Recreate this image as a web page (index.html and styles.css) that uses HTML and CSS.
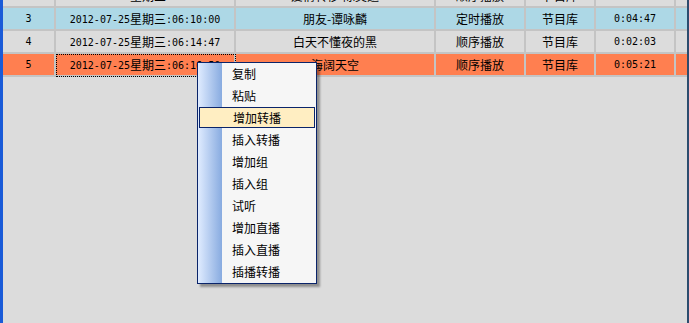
FILE: index.html
```html
<!DOCTYPE html>
<html lang="zh-CN">
<head>
    <meta charset="UTF-8">
    <title>播出列表</title>
    <link rel="stylesheet" href="styles.css">
</head>
<body>
    <div class="window">
        <div class="list">
            <table class="grid">
                <tr class="row">
                    <td class="c1">2</td>
                    <td class="c2">2012-07-25<span class="cn">星期三</span>:06:06:19</td>
                    <td class="c3 cn">爱情转移-陈奕迅</td>
                    <td class="c4 cn">顺序播放</td>
                    <td class="c5 cn">节目库</td>
                    <td class="c6">0:04:21</td>
                    <td class="c7"></td>
                </tr>
                <tr class="row blue">
                    <td class="c1">3</td>
                    <td class="c2">2012-07-25<span class="cn">星期三</span>:06:10:00</td>
                    <td class="c3 cn">朋友-谭咏麟</td>
                    <td class="c4 cn">定时播放</td>
                    <td class="c5 cn">节目库</td>
                    <td class="c6">0:04:47</td>
                    <td class="c7"></td>
                </tr>
                <tr class="row">
                    <td class="c1">4</td>
                    <td class="c2">2012-07-25<span class="cn">星期三</span>:06:14:47</td>
                    <td class="c3 cn">白天不懂夜的黑</td>
                    <td class="c4 cn">顺序播放</td>
                    <td class="c5 cn">节目库</td>
                    <td class="c6">0:02:03</td>
                    <td class="c7"></td>
                </tr>
                <tr class="row orange">
                    <td class="c1">5</td>
                    <td class="c2 focus">2012-07-25<span class="cn">星期三</span>:06:16:50</td>
                    <td class="c3 cn">海阔天空</td>
                    <td class="c4 cn">顺序播放</td>
                    <td class="c5 cn">节目库</td>
                    <td class="c6">0:05:21</td>
                    <td class="c7"></td>
                </tr>
            </table>

            <ul class="menu">
                <li class="item">复制</li>
                <li class="item">粘贴</li>
                <li class="item active">增加转播</li>
                <li class="item">插入转播</li>
                <li class="item">增加组</li>
                <li class="item">插入组</li>
                <li class="item">试听</li>
                <li class="item">增加直播</li>
                <li class="item">插入直播</li>
                <li class="item">插播转播</li>
            </ul>
        </div>
    </div>
</body>
</html>
```

FILE: styles.css
```css
html, body {
    margin: 0;
    height: 100%;
}

body {
    background: #dcdcdc;
    font-family: "Noto Sans CJK SC", sans-serif;
    overflow: hidden;
}

.window {
    height: 100%;
    border-left: 3px solid #1a5bd8;
    border-right: 2px solid #2c4c6e;
    box-sizing: border-box;
}

.list {
    position: relative;
    height: 100%;
    overflow: hidden;
}

.grid {
    border-collapse: separate;
    border-spacing: 0;
    margin-top: -15px;
    table-layout: fixed;
    width: 684px;
}

.grid td {
    height: 21px;
    padding: 0;
    text-align: center;
    border-right: 2px solid #c4c4c4;
    border-bottom: 2px solid #c4c4c4;
    font: 10px "DejaVu Sans Mono", monospace;
    color: #000;
    white-space: nowrap;
    overflow: hidden;
}

.grid .cn {
    font: 12px "Noto Sans CJK SC", sans-serif;
}

.grid td .cn {
    vertical-align: -1px;
}

.c1 { width: 51px; }
.c2 { width: 178px; }
.c3 { width: 198px; }
.c4 { width: 88px; }
.c5 { width: 68px; }
.c6 { width: 78px; }
.grid .c7 { border-right: none; }

.row { background: #dcdcdc; }
.blue { background: #add8e6; }
.orange { background: #ff7f50; }

.focus {
    outline: 1px dotted #000;
    outline-offset: -1px;
}

/* right click menu */
.menu {
    position: absolute;
    left: 194px;
    top: 62px;
    width: 118px;
    margin: 0;
    padding: 0;
    list-style: none;
    border: 1px solid #0a246a;
    background: linear-gradient(to right, #e0ecff, #88abe0) 0 0 / 24px 100% no-repeat, #f6f6f6;
    box-shadow: 3px 3px 2px rgba(0, 0, 0, 0.35);
}

.item {
    height: 22px;
    line-height: 22px;
    padding-left: 34px;
    font-size: 12px;
    color: #000;
    box-sizing: border-box;
}

.active {
    margin: 0 1px 1px;
    height: 21px;
    line-height: 19px;
    padding-left: 33px;
    background: #ffeec2;
    border: 1px solid #0a246a;
}
```
